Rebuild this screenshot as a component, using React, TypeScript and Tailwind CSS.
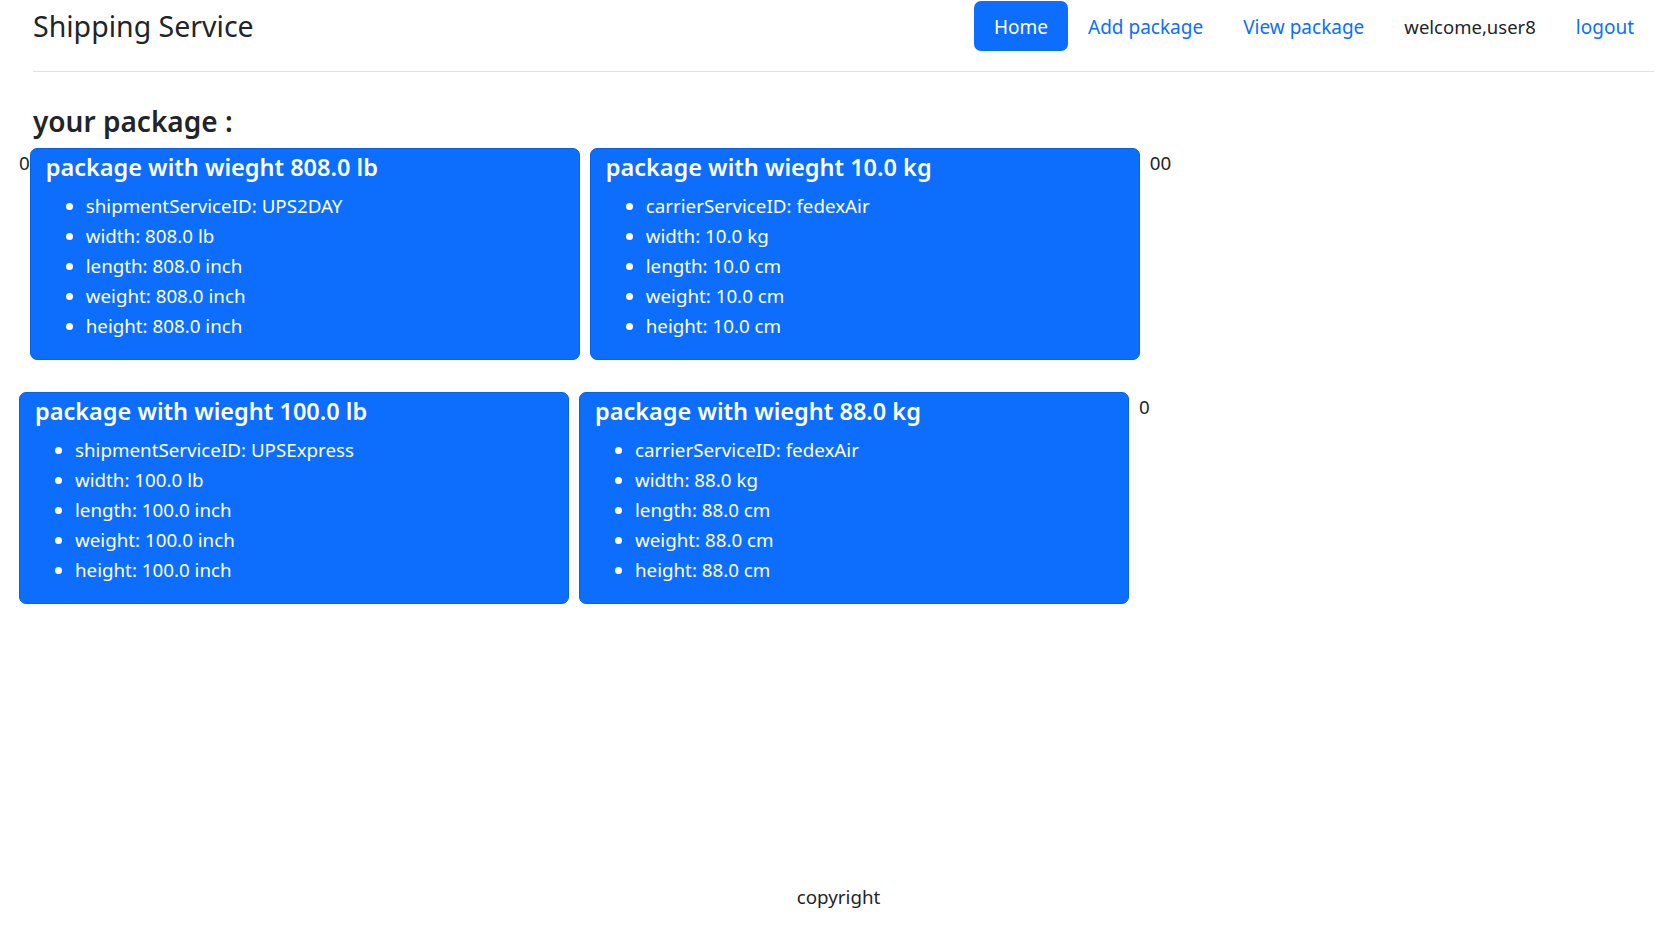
const packages = [
  {
    title: "package with wieght 808.0 lb",
    items: [
      "shipmentServiceID: UPS2DAY",
      "width: 808.0 lb",
      "length: 808.0 inch",
      "weight: 808.0 inch",
      "height: 808.0 inch",
    ],
  },
  {
    title: "package with wieght 10.0 kg",
    items: [
      "carrierServiceID: fedexAir",
      "width: 10.0 kg",
      "length: 10.0 cm",
      "weight: 10.0 cm",
      "height: 10.0 cm",
    ],
  },
  {
    title: "package with wieght 100.0 lb",
    items: [
      "shipmentServiceID: UPSExpress",
      "width: 100.0 lb",
      "length: 100.0 inch",
      "weight: 100.0 inch",
      "height: 100.0 inch",
    ],
  },
  {
    title: "package with wieght 88.0 kg",
    items: [
      "carrierServiceID: fedexAir",
      "width: 88.0 kg",
      "length: 88.0 cm",
      "weight: 88.0 cm",
      "height: 88.0 cm",
    ],
  },
];

const PackageCard = ({ pkg }: { pkg: (typeof packages)[number] }) => {
  return (
    <div className="w-[550px] mr-[10px] shrink-0 bg-[#0d6efd] text-white border border-[#0b62e0] rounded-[7px] pt-[3px] px-[15px]">
      <h5 className="text-[23.5px] leading-[30px] font-semibold mb-[9px]">{pkg.title}</h5>
      <ul className="list-disc pl-[40px] pb-[18px]">
        {pkg.items.map((item) => (
          <li key={item} className="leading-[30px]">
            {item}
          </li>
        ))}
      </ul>
    </div>
  );
};

export default function App() {
  return (
    <div className="min-h-screen flex flex-col bg-white text-[#212529] font-['Noto_Sans',sans-serif] text-[18.75px] leading-[30px]">
      {/* top nav */}
      <header className="ml-[33px] mr-[23px] h-[72px] pt-[1px] flex items-start justify-between border-b border-[#dee2e6]">
        <a className="mt-[6px] text-[28.5px] leading-[38px] text-[#212529]">Shipping Service</a>
        <nav className="flex items-center text-[19px]">
          <a className="px-5 pt-[11px] pb-[9px] rounded-[7px] bg-[#0d6efd] text-white">Home</a>
          <a className="px-5 pt-[11px] pb-[9px] text-[#0d6efd]">Add package</a>
          <a className="px-5 pt-[11px] pb-[9px] text-[#0d6efd]">View package</a>
          <span className="px-5 pt-[11px] pb-[9px] text-[18.5px]">welcome,user8</span>
          <a className="px-5 pt-[11px] pb-[9px] text-[#0d6efd]">logout</a>
        </nav>
      </header>

      <main className="flex-1 pt-[31px]">
        <h4 className="ml-[33px] text-[28px] leading-[36px] font-semibold mb-[9px]">your package :</h4>

        <div className="pl-[19px] flex items-start">
          <span>0</span>
          <PackageCard pkg={packages[0]} />
          <PackageCard pkg={packages[1]} />
          <span>00</span>
        </div>

        <div className="pl-[19px] mt-[32px] flex items-start">
          <PackageCard pkg={packages[2]} />
          <PackageCard pkg={packages[3]} />
          <span>0</span>
        </div>
      </main>

      <footer className="text-center pb-[14px] text-[#212529]">copyright</footer>
    </div>
  );
}
